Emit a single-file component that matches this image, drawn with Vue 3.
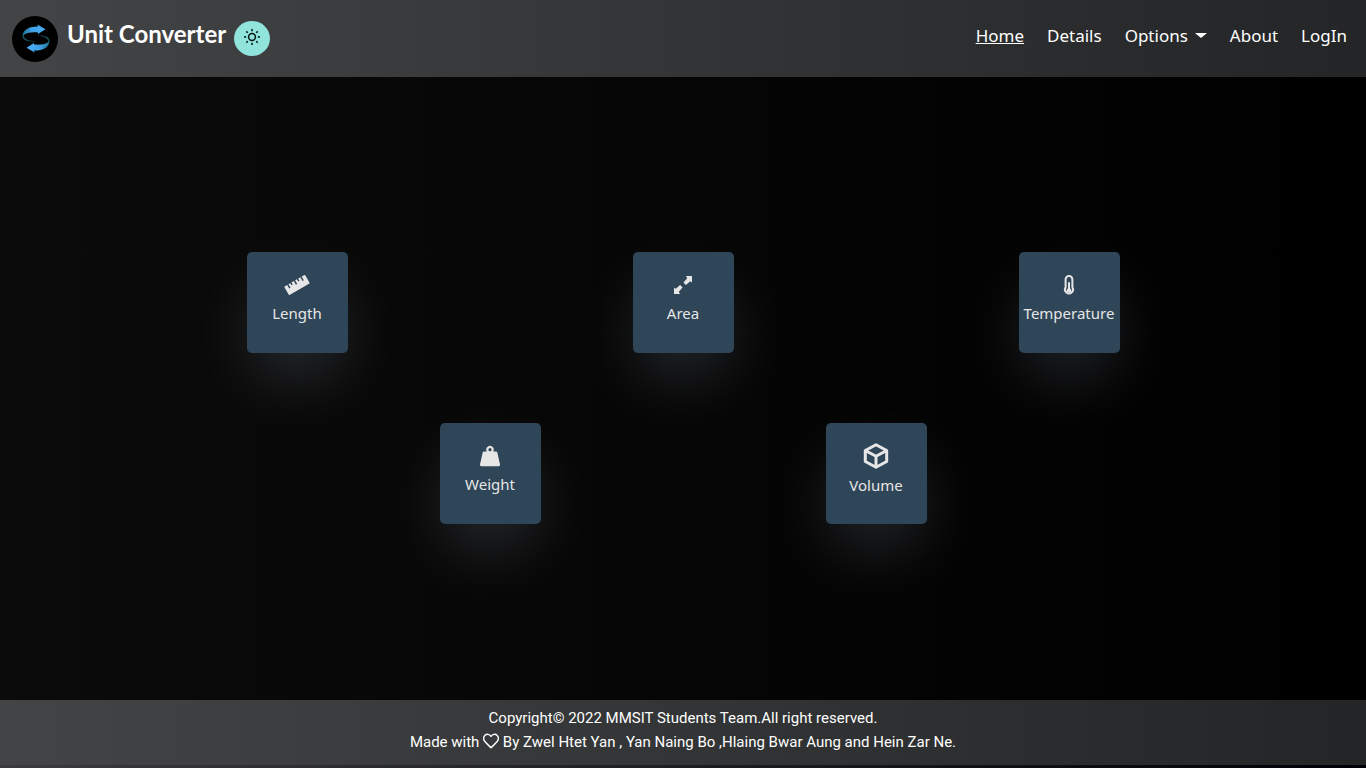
<script setup>
import { ref } from 'vue'

const current = ref('Home')
const links = [
  { label: 'Home' },
  { label: 'Details' },
  { label: 'Options', menu: true },
  { label: 'About' },
  { label: 'LogIn' },
]
const units = [
  { key: 'length', label: 'Length' },
  { key: 'area', label: 'Area' },
  { key: 'temperature', label: 'Temperature' },
  { key: 'weight', label: 'Weight' },
  { key: 'volume', label: 'Volume' },
]
</script>

<template>
  <div class="page">
    <header class="topbar">
      <a class="brand" href="#">
        <svg class="logo" viewBox="0 0 46 46" aria-hidden="true">
          <defs>
            <linearGradient id="sweepTop" x1="0" x2="1">
              <stop offset="0" stop-color="#1f7189" />
              <stop offset=".4" stop-color="#3d9ee6" />
              <stop offset="1" stop-color="#4db0f2" />
            </linearGradient>
            <linearGradient id="sweepBottom" x1="1" x2="0">
              <stop offset="0" stop-color="#1f7189" />
              <stop offset=".4" stop-color="#3d9ee6" />
              <stop offset="1" stop-color="#4db0f2" />
            </linearGradient>
          </defs>
          <circle cx="23" cy="23" r="23" fill="#000" />
          <path d="M10.500 20C11 13.500 17.500 10.300 26 10.500L25.300 8.500 33.500 13.200 26 18 26 16.400C19.500 16 14 16.500 10.500 20Z" fill="url(#sweepTop)" />
          <path d="M10.500 19.500C10 24 15.500 26.200 24 25.200C17.500 25.200 11.500 23.500 11.500 18.500Z" fill="#1b5260" />
          <path d="M37.500 25C37 32 30.500 34.700 22 34.500L22.700 36.500 14.500 31.800 22 27 22 28.600C28.500 29 34 28.500 37.500 25Z" fill="url(#sweepBottom)" />
          <path d="M37.500 25.500C38 21 32.500 18.800 24 19.800C30.500 19.800 36.500 21.500 36.500 26.500Z" fill="#1b5260" />
        </svg>
        <span class="brand-name">Unit Converter</span>
      </a>
      <button class="theme" type="button" aria-label="Toggle theme">
        <svg viewBox="0 0 16 16" width="16" height="16" fill="none" stroke="#071413" stroke-width="1.5" aria-hidden="true">
          <circle cx="8" cy="8" r="3.400" />
          <path d="M8 0v2.200M8 13.800V16M0 8h2.200M13.800 8H16M2.350 2.350l1.400 1.400M12.250 12.250l1.400 1.400M2.350 13.650l1.400-1.400M12.250 3.750l1.400-1.400" />
        </svg>
      </button>
      <nav class="nav" aria-label="Main">
        <template v-for="link in links" :key="link.label">
          <button v-if="link.menu" class="nav-item" type="button" aria-haspopup="true">
            {{ link.label }}<span class="caret"></span>
          </button>
          <a v-else class="nav-item" :class="{ active: current === link.label }" href="#" @click.prevent="current = link.label">{{ link.label }}</a>
        </template>
      </nav>
    </header>

    <main class="units">
      <a v-for="unit in units" :key="unit.key" class="card" :class="unit.key" href="#">
        <svg v-if="unit.key === 'length'" class="icon" viewBox="0 0 26 26" aria-hidden="true">
          <g transform="rotate(-30 13 13)">
            <path d="M2 8H4.500V12.200H6V8H8V10.500H9.500V8H12.200V12.200H13.700V8H15.800V10.500H17.300V8H19.800V12.200H21.300V8H24Q25 8 25 9V17Q25 18 24 18H2Q1 18 1 17V9Q1 8 2 8Z" fill="#e6e6e6" />
          </g>
        </svg>
        <svg v-else-if="unit.key === 'area'" class="icon" viewBox="0 0 26 26" aria-hidden="true">
          <g fill="#e6e6e6">
            <path d="M16 4H21.500Q22 4 22 4.500V10.500L20.200 9.200 15.900 13 13.400 10.500 17.200 6.200Z" />
            <path d="M10 22H4.500Q4 22 4 21.500V15.500L5.800 16.800 10.100 13 12.600 15.500 8.800 19.800Z" />
          </g>
        </svg>
        <svg v-else-if="unit.key === 'temperature'" class="icon" viewBox="0 0 26 26" aria-hidden="true">
          <path d="M9.600 7.400a3.400 3.400 0 0 1 6.800 0V15.300a4 4 0 1 1-6.800 0Z" fill="none" stroke="#e6e6e6" stroke-width="2" />
          <path d="M13 11V18" stroke="#e6e6e6" stroke-width="2" stroke-linecap="round" />
          <circle cx="13" cy="18.500" r="2.300" fill="#e6e6e6" />
        </svg>
        <svg v-else-if="unit.key === 'weight'" class="icon" viewBox="0 0 26 26" aria-hidden="true">
          <path fill="#e6e6e6" fill-rule="evenodd" d="M9.800 8.500a3.700 3.700 0 1 1 6.400 0H19Q20 8.500 20.300 9.500L23 21.500Q23.300 23.300 21.700 23.300H4.300Q2.700 23.300 3 21.500L5.700 9.500Q6 8.500 7 8.500ZM13 5.100a1.600 1.600 0 1 0 0 3.200 1.600 1.600 0 0 0 0-3.200Z" />
        </svg>
        <svg v-else class="icon" viewBox="0 0 28 28" fill="none" stroke="#e6e6e6" stroke-width="3" stroke-linejoin="round" aria-hidden="true">
          <path d="M14 2.700 24.700 8.500V19.500L14 25.300 3.300 19.500V8.500ZM3.300 8.500 14 14.300 24.700 8.500M14 14.300V25.300" />
        </svg>
        <span>{{ unit.label }}</span>
      </a>
    </main>

    <footer class="footer">
      <p>Copyright© 2022 MMSIT Students Team.All right reserved.</p>
      <p>
        Made with
        <svg class="heart" viewBox="0 0 16 16" aria-label="love" role="img">
          <path fill="none" stroke="#fff" stroke-width="1.400" stroke-linejoin="round" d="M8 3.500C6.500.8 3.600.8 2 2.300.4 3.900.2 6.200 1.600 8.200 3 10.300 5.500 12.300 8 14.700 10.500 12.300 13 10.300 14.400 8.200 15.800 6.200 15.600 3.900 14 2.300 12.400.8 9.500.8 8 3.500Z" />
        </svg>
        By Zwel Htet Yan , Yan Naing Bo ,Hlaing Bwar Aung and Hein Zar Ne.
      </p>
    </footer>
  </div>
</template>

<style>
body {
  background: linear-gradient(to right, #3b3b3e, #000106);
}
</style>

<style scoped>
.page {
  box-sizing: border-box;
  min-height: 100vh;
  padding-bottom: 3px;
  display: flex;
  flex-direction: column;
  color: #fff;
  font-family: "Noto Sans", "Open Sans", sans-serif;
  font-size: 16px;
}
.topbar {
  box-sizing: border-box;
  min-height: 77px;
  padding: 0 19px 0 12px;
  display: flex;
  align-items: center;
  background: linear-gradient(to right, #434445, #232526);
}
.brand {
  display: flex;
  align-items: center;
  gap: 9px;
  color: #fff;
  text-decoration: none;
}
.logo {
  width: 46px;
  height: 46px;
}
.brand-name {
  font-family: Lato, sans-serif;
  font-size: 24px;
  font-weight: 700;
  line-height: 32px;
  padding-bottom: 10px;
}
.theme {
  width: 36px;
  height: 35px;
  margin-left: 8px;
  padding: 0;
  border: 0;
  border-radius: 50%;
  display: grid;
  place-items: center;
  background: #90e4dc;
}
.theme svg {
  margin-bottom: 3px;
}
.nav {
  margin-left: auto;
  padding-bottom: 6px;
  display: flex;
  align-items: center;
  gap: 23px;
}
.nav-item {
  padding: 0;
  border: 0;
  display: flex;
  align-items: center;
  background: none;
  color: #fff;
  font: inherit;
  font-size: 17px;
  line-height: 24px;
  text-decoration: none;
}
.nav-item.active {
  text-decoration: underline;
}
.caret {
  margin-left: 7px;
  border: 6px solid transparent;
  border-top: 5px solid #fff;
  border-bottom: 0;
}
.units {
  flex: 1;
  padding: 30px 104px 32px;
  display: grid;
  grid-template-columns: repeat(6, 1fr);
  align-content: center;
  justify-items: center;
  row-gap: 70px;
  background: linear-gradient(to right, #0b0b0b, #000);
}
.card {
  box-sizing: border-box;
  grid-column: span 2;
  width: 101px;
  height: 101px;
  padding-top: 20px;
  display: flex;
  flex-direction: column;
  align-items: center;
  gap: 4px;
  border-radius: 5px;
  background: #2f4558;
  box-shadow: 0 30px 66px -7px rgba(225, 235, 255, 0.16);
  color: #e6e6e6;
  font-size: 15px;
  line-height: 22px;
  text-decoration: none;
}
.card.weight {
  grid-column: 2 / span 2;
}
.icon {
  width: 26px;
  height: 26px;
}
.card.volume {
  padding-top: 19px;
}
.volume .icon {
  width: 28px;
  height: 28px;
}
.footer {
  box-sizing: border-box;
  min-height: 65px;
  padding: 6px 12px 11px;
  background: linear-gradient(to right, #434445, #232526);
  font-family: Roboto, sans-serif;
  font-size: 15px;
  line-height: 24px;
  text-align: center;
}
.footer p {
  margin: 0;
}
.heart {
  width: 16px;
  height: 16px;
  vertical-align: -2px;
}
</style>
